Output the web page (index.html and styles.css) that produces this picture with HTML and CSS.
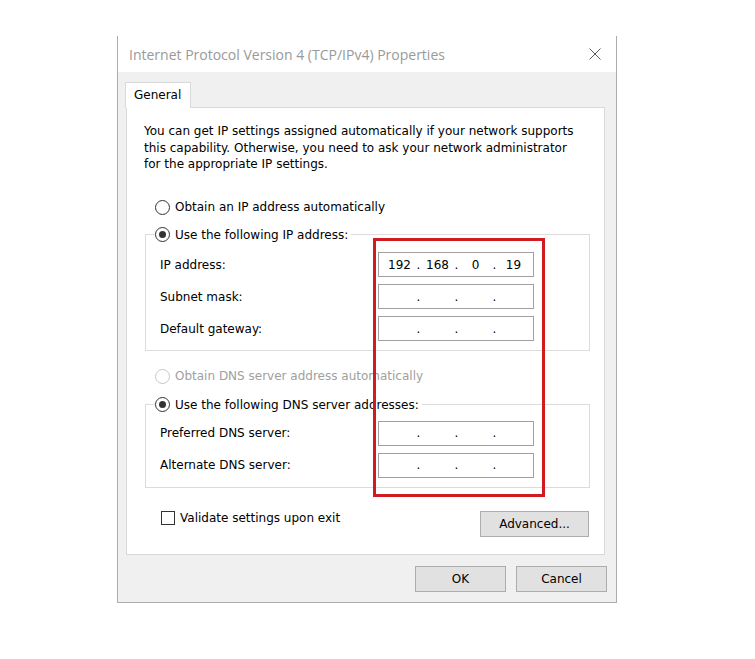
FILE: index.html
```html
<!DOCTYPE html>
<html>
<head>
<meta charset="utf-8">
<link rel="stylesheet" href="styles.css">
</head>
<body>
<div class="dialog">
  <div class="titlebar">
    <span class="title">Internet Protocol Version 4 (TCP/IPv4) Properties</span>
    <svg class="close" width="12" height="12" viewBox="0 0 12 12"><path d="M0.5 0.5 L11.5 11.5 M11.5 0.5 L0.5 11.5" stroke="#5a5a5a" stroke-width="1" fill="none"/></svg>
  </div>
  <div class="client">
    <div class="tabs"><div class="tab">General</div></div>
    <div class="panel">
      <p class="intro">You can get IP settings assigned automatically if your network supports<br>this capability. Otherwise, you need to ask your network administrator<br>for the appropriate IP settings.</p>
      <div class="opt first-opt"><span class="radio"></span>Obtain an IP address automatically</div>
      <div class="group ip-group">
        <div class="legend"><span class="radio checked"></span>Use the following IP address:</div>
        <div class="rows">
          <div class="row"><span class="label">IP address:</span>
            <div class="ipbox"><span class="oct">192</span><span class="dot">.</span><span class="oct">168</span><span class="dot">.</span><span class="oct">0</span><span class="dot">.</span><span class="oct">19</span></div></div>
          <div class="row"><span class="label">Subnet mask:</span>
            <div class="ipbox"><span class="oct"></span><span class="dot">.</span><span class="oct"></span><span class="dot">.</span><span class="oct"></span><span class="dot">.</span><span class="oct"></span></div></div>
          <div class="row"><span class="label">Default gateway:</span>
            <div class="ipbox"><span class="oct"></span><span class="dot">.</span><span class="oct"></span><span class="dot">.</span><span class="oct"></span><span class="dot">.</span><span class="oct"></span></div></div>
        </div>
      </div>
      <div class="opt dns-opt disabled"><span class="radio"></span>Obtain DNS server address automatically</div>
      <div class="group dns-group">
        <div class="legend"><span class="radio checked"></span>Use the following DNS server addresses:</div>
        <div class="rows">
          <div class="row"><span class="label">Preferred DNS server:</span>
            <div class="ipbox"><span class="oct"></span><span class="dot">.</span><span class="oct"></span><span class="dot">.</span><span class="oct"></span><span class="dot">.</span><span class="oct"></span></div></div>
          <div class="row"><span class="label">Alternate DNS server:</span>
            <div class="ipbox"><span class="oct"></span><span class="dot">.</span><span class="oct"></span><span class="dot">.</span><span class="oct"></span><span class="dot">.</span><span class="oct"></span></div></div>
        </div>
      </div>
      <div class="bottom-row">
        <div class="check-line"><span class="checkbox"></span>Validate settings upon exit</div>
        <button class="btn advanced">Advanced...</button>
      </div>
    </div>
    <div class="buttons">
      <button class="btn">OK</button>
      <button class="btn">Cancel</button>
    </div>
  </div>
</div>
<div class="highlight"></div>
</body>
</html>
```
FILE: styles.css
```css
* { box-sizing: border-box; }
html, body { margin: 0; padding: 0; background: #fff; }
body {
  width: 755px;
  height: 659px;
  position: relative;
  overflow: hidden;
  font-family: "DejaVu Sans", sans-serif;
  font-size: 12px;
  color: #000;
}
.dialog {
  margin: 36px 0 0 117px;
  width: 500px;
  height: 567px;
  border: 1px solid #acacac;
  border-top: none;
  display: flex;
  flex-direction: column;
}
.titlebar {
  height: 36px;
  background: #fff;
  display: flex;
  align-items: center;
  justify-content: space-between;
  padding: 0 15px 0 11px;
}
.title {
  font-family: "Open Sans", sans-serif;
  font-size: 14px;
  color: #999;
}
.close { display: block; }
.client {
  flex: 1;
  background: #f0f0f0;
  padding: 10px 9px 9px 8px;
  display: flex;
  flex-direction: column;
}
.tabs { height: 25px; display: flex; }
.tab {
  margin-left: -1px;
  width: 66px;
  height: 26px;
  background: #fff;
  border: 1px solid #d9d9d9;
  border-bottom: none;
  padding-left: 8px;
  line-height: 25px;
  position: relative;
  z-index: 1;
}
.panel {
  width: 479px;
  height: 448px;
  background: #fff;
  border: 1px solid #d9d9d9;
  padding: 15px 14px 0 18px;
}
.intro {
  margin: 0 0 0 -1px;
  line-height: 16.5px;
  white-space: nowrap;
}
.opt, .legend, .check-line {
  display: flex;
  align-items: center;
  height: 17px;
  white-space: nowrap;
}
.first-opt { margin: 26px 0 0 10px; }
.dns-opt { margin: 17px 0 0 10px; }
.disabled { color: #a0a0a0; }
.radio {
  width: 15px;
  height: 15px;
  border: 1px solid #333;
  border-radius: 50%;
  margin-right: 5px;
  background: #fff;
  display: flex;
  align-items: center;
  justify-content: center;
  flex: none;
}
.disabled .radio { border-color: #c8c8c8; }
.radio.checked::after {
  content: "";
  width: 7px;
  height: 7px;
  border-radius: 50%;
  background: #333;
}
.group {
  border: 1px solid #dcdcdc;
}
.ip-group { margin-top: 18.5px; }
.dns-group { margin-top: 19.5px; }
.legend {
  width: fit-content;
  margin: -9px 0 0 9px;
  background: #fff;
  padding-right: 3px;
}
.rows { padding-left: 14px; }
.ip-group .rows { margin-top: 5.5px; padding-bottom: 5px; }
.dns-group .rows { margin-top: 4px; padding-bottom: 6px; }
.row {
  height: 32px;
  display: flex;
  align-items: center;
}
.label { width: 218px; }
.ipbox {
  width: 156px;
  height: 25px;
  border: 1px solid #a0a0a0;
  background: #fff;
  display: flex;
  align-items: center;
  padding-left: 4px;
}
.oct { width: 33px; text-align: center; }
.dot { width: 5px; text-align: center; }
.bottom-row {
  margin-top: 23px;
  display: flex;
  justify-content: space-between;
  align-items: flex-start;
  padding-right: 1px;
}
.check-line { margin-left: 16px; height: 14px; }
.checkbox {
  width: 14px;
  height: 14px;
  border: 1px solid #333;
  margin-right: 5px;
  background: #fff;
}
.btn {
  width: 91px;
  height: 26px;
  background: #e1e1e1;
  border: 1px solid #adadad;
  font-family: "DejaVu Sans", sans-serif;
  font-size: 12px;
  color: #000;
  padding: 0;
  margin: 0;
}
.advanced { width: 109px; }
.buttons {
  margin-top: 11px;
  display: flex;
  justify-content: flex-end;
  gap: 10px;
}
.highlight {
  position: absolute;
  left: 373px;
  top: 238px;
  width: 172px;
  height: 259px;
  border: 3px solid #cf1b22;
}
```
